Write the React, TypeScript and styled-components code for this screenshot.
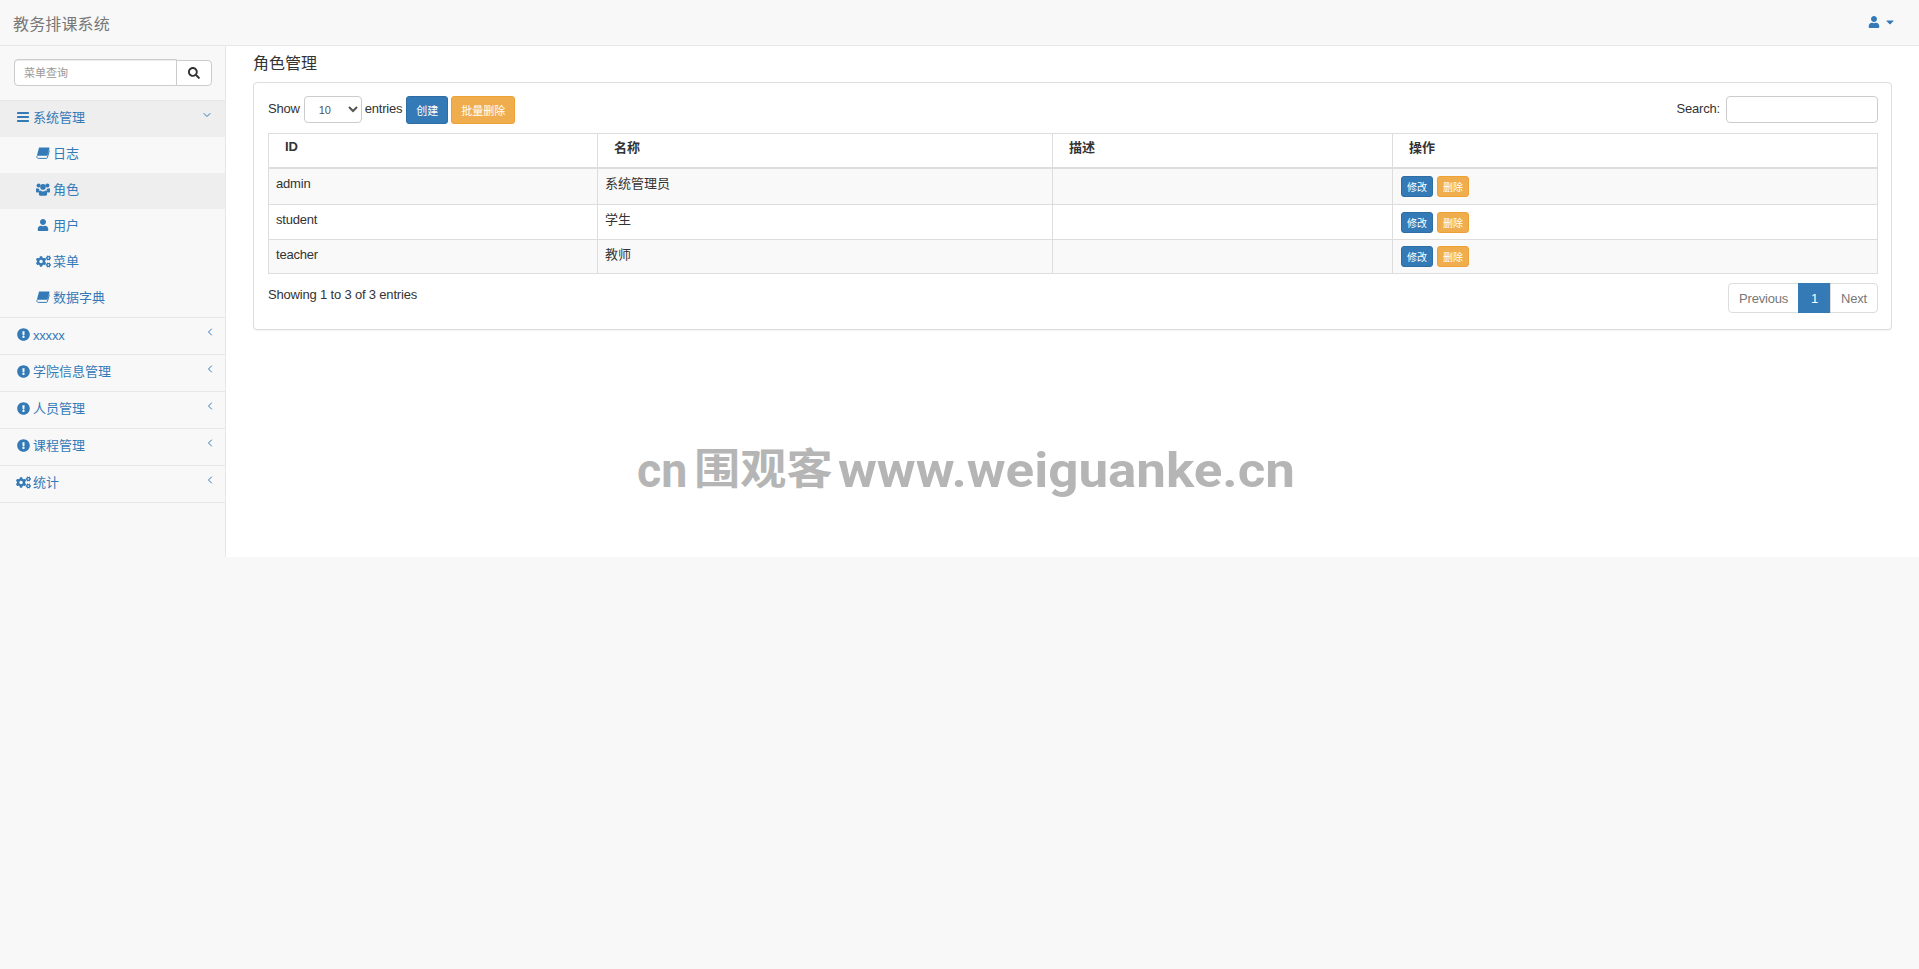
import React from 'react'
import styled, { createGlobalStyle } from 'styled-components'
import { FaCaretDown, FaCogs, FaExclamationCircle, FaSearch, FaUser } from 'react-icons/fa'
import { FiChevronDown, FiChevronLeft } from 'react-icons/fi'

const BLUE = '#337ab7'
const ORANGE = '#f0ad4e'
const LINE = '#ddd'
const FONT = '"Liberation Sans", "Noto Sans CJK SC", Arial, sans-serif'

const GlobalStyle = createGlobalStyle`
  html, body {
    margin: 0;
    padding: 0;
    height: 100%;
  }
  body {
    background: #f8f8f8;
    font-family: ${FONT};
    font-size: 13px;
    color: #333;
  }
  * {
    box-sizing: border-box;
  }
`

const BookIcon = () => (
  <svg width="14" height="12" viewBox="0 0 14 12">
    <path
      fill="currentColor"
      d="M3.4.4h9.4c.5 0 .8.4.7.9l-2 6.9c-.1.4-.4.6-.8.6H1.600c-.3 0-.6.1-.8.3L3 .7c.1-.2.2-.3.4-.3z"
    />
    <path
      fill="none"
      stroke="currentColor"
      strokeWidth="1"
      d="M.9 9.2c-.3 1.1.3 2.2 1.4 2.2h8.2c.4 0 .7-.2.8-.6L13.4 3.6"
    />
  </svg>
)

const BarsIcon = () => (
  <svg width="12" height="10" viewBox="0 0 12 10" fill="currentColor">
    <rect y="0" width="12" height="2" rx=".4" />
    <rect y="4" width="12" height="2" rx=".4" />
    <rect y="8" width="12" height="2" rx=".4" />
  </svg>
)

const UsersIcon = () => (
  <svg width="14" height="13" viewBox="0 0 14 13" fill="currentColor">
    <circle cx="2.6" cy="2.4" r="2" />
    <circle cx="11.4" cy="2.4" r="2" />
    <circle cx="7" cy="3.9" r="2.8" />
    <path d="M.2 5.6C.7 5 1.2 5.2 1.6 5.5c.5.3 1 .4 1.6.3-.1 1 .1 1.9.7 2.6-.6.2-1.1.6-1.5 1.1H1C.3 9.500 0 9 0 8.200V6.100c0-.2 0-.4.2-.5zM13.800 5.600c-.5-.6-1-.4-1.400-.1-.5.3-1 .4-1.600.3.1 1-.1 1.900-.7 2.600.6.2 1.100.6 1.500 1.100H13c.7 0 1-.5 1-1.300V6.100c0-.2 0-.4-.2-.5z" />
    <path d="M4.600 7.500c.7.600 1.500.9 2.400.9s1.700-.3 2.400-.9c1 0 1.700.7 1.700 2v1.500c0 1-.6 1.700-1.500 1.700H4.400c-.9 0-1.500-.7-1.500-1.700V9.500c0-1.300.7-2 1.700-2z" />
  </svg>
)

const Navbar = styled.div`
  height: 46px;
  display: flex;
  align-items: center;
  justify-content: space-between;
  padding: 0 26px 0 13px;
  background: #f8f8f8;
  border-bottom: 1px solid #e7e7e7;
`

const Brand = styled.span`
  font-size: 16px;
  letter-spacing: 0.15px;
  color: #777;
`

const UserMenu = styled.span`
  display: flex;
  align-items: center;
  gap: 4px;
  color: ${BLUE};
  font-size: 12px;
  margin: -1px -3px 0 0;
`

const Body = styled.div`
  display: flex;
  height: 511px;
  position: relative;
`

const Sidebar = styled.div`
  width: 226px;
  flex: 0 0 226px;
  border-right: 1px solid #e7e7e7;
`

const SearchRow = styled.div`
  height: 55px;
  display: flex;
  padding: 13px 0 0 14px;
  border-bottom: 1px solid #e7e7e7;
`

const SearchInput = styled.input`
  width: 163px;
  height: 27px;
  border: 1px solid #ccc;
  border-radius: 4px 0 0 4px;
  padding: 0 9px;
  font-family: ${FONT};
  font-size: 11px;
  background: #fff;
  outline: none;
  box-shadow: inset 0 1px 1px rgba(0, 0, 0, 0.075);
  &::placeholder {
    color: #999;
    opacity: 1;
  }
`

const SearchButton = styled.button`
  width: 36px;
  height: 26px;
  margin-left: -1px;
  margin-top: 1px;
  padding: 0;
  display: flex;
  align-items: center;
  justify-content: center;
  color: #333;
  background: #fff;
  border: 1px solid #ccc;
  border-radius: 0 4px 4px 0;
  font-size: 12px;
`

const MenuRow = styled.div<{ $sub?: boolean; $active?: boolean; $divider?: boolean }>`
  display: flex;
  align-items: center;
  height: ${p => (p.$divider ? 37 : 36)}px;
  padding: 0 9px 6px ${p => (p.$sub ? 35 : 15)}px;
  color: ${BLUE};
  font-size: 13px;
  background: ${p => (p.$active ? '#eee' : 'transparent')};
  border-bottom: ${p => (p.$divider ? '1px solid #e7e7e7' : '0')};
`

const MenuIcon = styled.span`
  width: 18px;
  margin: 2px 1px 0 -1px;
  display: flex;
  align-items: center;
  justify-content: center;
  font-size: 13px;
`

const MenuLabel = styled.span<{ $latin?: boolean }>`
  flex: 1;
  margin-top: ${p => (p.$latin ? 4 : 0)}px;
  letter-spacing: ${p => (p.$latin ? '-0.2px' : '0')};
`

const Arrow = styled.span<{ $down?: boolean }>`
  display: flex;
  font-size: 12px;
  margin-top: -2px;
  margin-right: ${p => (p.$down ? 3 : 0)}px;
`

const Main = styled.div`
  flex: 1;
  background: #fff;
  padding: 8px 27px 0 27px;
`

const PageTitle = styled.div`
  font-size: 16px;
  line-height: 20px;
  height: 28px;
`

const Panel = styled.div`
  height: 248px;
  padding: 13px 13px 0 14px;
  background: #fff;
  border: 1px solid ${LINE};
  border-radius: 4px;
  box-shadow: 0 1px 1px rgba(0, 0, 0, 0.05);
`

const Toolbar = styled.div`
  display: flex;
  justify-content: space-between;
  height: 37px;
`

const ToolGroup = styled.div`
  display: flex;
  align-items: flex-start;
`

const ToolText = styled.span`
  line-height: 25px;
  letter-spacing: -0.2px;
  white-space: pre;
`

const LengthSelect = styled.select`
  width: 58px;
  height: 27px;
  margin: 0 3px 0 4px;
  padding-left: 10px;
  font-family: ${FONT};
  font-size: 11px;
  color: #555;
  background: #fff;
  border: 1px solid #ccc;
  border-radius: 4px;
  outline: none;
`

const ActionButton = styled.button<{ $warn?: boolean }>`
  height: 28px;
  padding: 0 9px;
  margin-left: ${p => (p.$warn ? 3 : 4)}px;
  font-family: ${FONT};
  font-size: 11px;
  color: #fff;
  background: ${p => (p.$warn ? ORANGE : BLUE)};
  border: 1px solid ${p => (p.$warn ? '#eea236' : '#2e6da4')};
  border-radius: 3px;
`

const SearchBox = styled.input`
  width: 152px;
  height: 27px;
  margin-left: 6px;
  background: #fff;
  border: 1px solid #ccc;
  border-radius: 4px;
  outline: none;
`

const Table = styled.table`
  width: 100%;
  border-collapse: collapse;
  table-layout: fixed;
  border: 1px solid ${LINE};
`

const HeadCell = styled.th`
  height: 34px;
  padding: 0 0 8px 16px;
  text-align: left;
  font-size: 13px;
  font-weight: 700;
  border: 1px solid ${LINE};
  border-bottom-width: 2px;
`

const Row = styled.tr<{ $odd?: boolean }>`
  background: ${p => (p.$odd ? '#f9f9f9' : '#fff')};
`

const Cell = styled.td<{ $height: number; $actions?: boolean }>`
  height: ${p => p.$height}px;
  padding: 0 7px ${p => (p.$actions ? 0 : 7)}px;
  font-size: 13px;
  border: 1px solid ${LINE};
`

const IdText = styled.span`
  letter-spacing: -0.2px;
  position: relative;
  top: 1px;
`

const RowActions = styled.div`
  display: flex;
  gap: 4px;
  padding-left: 1px;
`

const SmallButton = styled.span<{ $warn?: boolean }>`
  height: 21px;
  width: 32px;
  display: flex;
  align-items: center;
  justify-content: center;
  font-size: 10px;
  color: #fff;
  background: ${p => (p.$warn ? ORANGE : BLUE)};
  border: 1px solid ${p => (p.$warn ? '#eea236' : '#2e6da4')};
  border-radius: 3px;
`

const Footer = styled.div`
  display: flex;
  justify-content: space-between;
  padding-top: 9px;
`

const Info = styled.div`
  line-height: 24px;
  letter-spacing: -0.18px;
`

const Pager = styled.div`
  display: flex;
  height: 30px;
`

const PageLink = styled.span<{ $current?: boolean; $pos?: 'first' | 'last' }>`
  display: flex;
  align-items: center;
  padding: 0 ${p => (p.$current ? 12 : p.$pos ? 10 : 11)}px;
  font-size: 13px;
  letter-spacing: -0.2px;
  color: ${p => (p.$current ? '#fff' : '#777')};
  background: ${p => (p.$current ? BLUE : '#fff')};
  border: 1px solid ${p => (p.$current ? BLUE : LINE)};
  margin-left: ${p => (p.$pos === 'first' ? 0 : -1)}px;
  border-radius: ${p =>
    p.$pos === 'first' ? '4px 0 0 4px' : p.$pos === 'last' ? '0 4px 4px 0' : '0'};
`

const Watermark = styled.div`
  position: absolute;
  left: 637px;
  top: 393px;
  display: flex;
  align-items: baseline;
  color: #b5b5b5;
  white-space: nowrap;
`

const MarkLatin = styled.span<{ $width: number; $scale: number }>`
  display: block;
  width: ${p => p.$width}px;
  font-family: Roboto, "Liberation Sans", sans-serif;
  font-size: 49px;
  line-height: 60px;
  font-weight: 700;
  transform: scaleX(${p => p.$scale});
  transform-origin: left;
`

const MarkCjk = styled.span`
  display: block;
  width: 144px;
  font-family: "Noto Sans CJK SC", sans-serif;
  font-size: 42px;
  line-height: 60px;
  font-weight: 700;
  transform: translateY(-3px) scaleX(1.1);
  transform-origin: left;
`

const subItems = [
  { label: '日志', icon: <BookIcon /> },
  { label: '角色', icon: <UsersIcon />, active: true },
  { label: '用户', icon: <FaUser size={12} /> },
  { label: '菜单', icon: <FaCogs size={15} /> },
  { label: '数据字典', icon: <BookIcon />, divider: true },
]

const groups = [
  { label: 'xxxxx', icon: <FaExclamationCircle />, latin: true },
  { label: '学院信息管理', icon: <FaExclamationCircle /> },
  { label: '人员管理', icon: <FaExclamationCircle /> },
  { label: '课程管理', icon: <FaExclamationCircle /> },
  { label: '统计', icon: <FaCogs size={15} /> },
]

const roles = [
  { id: 'admin', name: '系统管理员', height: 37 },
  { id: 'student', name: '学生', height: 35 },
  { id: 'teacher', name: '教师', height: 34 },
]

export default function App() {
  return (
    <>
      <GlobalStyle />
      <Navbar>
        <Brand>教务排课系统</Brand>
        <UserMenu>
          <FaUser />
          <FaCaretDown />
        </UserMenu>
      </Navbar>
      <Body>
        <Sidebar>
          <SearchRow>
            <SearchInput placeholder="菜单查询" />
            <SearchButton>
              <FaSearch />
            </SearchButton>
          </SearchRow>
          <MenuRow $active>
            <MenuIcon>
              <BarsIcon />
            </MenuIcon>
            <MenuLabel>系统管理</MenuLabel>
            <Arrow $down>
              <FiChevronDown />
            </Arrow>
          </MenuRow>
          {subItems.map(item => (
            <MenuRow key={item.label} $sub $active={item.active} $divider={item.divider}>
              <MenuIcon>{item.icon}</MenuIcon>
              <MenuLabel>{item.label}</MenuLabel>
            </MenuRow>
          ))}
          {groups.map(group => (
            <MenuRow key={group.label} $divider>
              <MenuIcon>{group.icon}</MenuIcon>
              <MenuLabel $latin={group.latin}>{group.label}</MenuLabel>
              <Arrow>
                <FiChevronLeft />
              </Arrow>
            </MenuRow>
          ))}
        </Sidebar>
        <Main>
          <PageTitle>角色管理</PageTitle>
          <Panel>
            <Toolbar>
              <ToolGroup>
                <ToolText>Show</ToolText>
                <LengthSelect defaultValue="10">
                  <option>10</option>
                </LengthSelect>
                <ToolText>entries</ToolText>
                <ActionButton>创建</ActionButton>
                <ActionButton $warn>批量删除</ActionButton>
              </ToolGroup>
              <ToolGroup>
                <ToolText>Search:</ToolText>
                <SearchBox />
              </ToolGroup>
            </Toolbar>
            <Table>
              <colgroup>
                <col style={{ width: 329 }} />
                <col style={{ width: 455 }} />
                <col style={{ width: 340 }} />
                <col />
              </colgroup>
              <thead>
                <tr>
                  <HeadCell>ID</HeadCell>
                  <HeadCell>名称</HeadCell>
                  <HeadCell>描述</HeadCell>
                  <HeadCell>操作</HeadCell>
                </tr>
              </thead>
              <tbody>
                {roles.map((role, i) => (
                  <Row key={role.id} $odd={i % 2 === 0}>
                    <Cell $height={role.height}>
                      <IdText>{role.id}</IdText>
                    </Cell>
                    <Cell $height={role.height}>{role.name}</Cell>
                    <Cell $height={role.height} />
                    <Cell $height={role.height} $actions>
                      <RowActions>
                        <SmallButton>修改</SmallButton>
                        <SmallButton $warn>删除</SmallButton>
                      </RowActions>
                    </Cell>
                  </Row>
                ))}
              </tbody>
            </Table>
            <Footer>
              <Info>Showing 1 to 3 of 3 entries</Info>
              <Pager>
                <PageLink $pos="first">Previous</PageLink>
                <PageLink $current>1</PageLink>
                <PageLink $pos="last">Next</PageLink>
              </Pager>
            </Footer>
          </Panel>
        </Main>
        <Watermark>
          <MarkLatin $width={57} $scale={0.95}>cn</MarkLatin>
          <MarkCjk>围观客</MarkCjk>
          <MarkLatin $width={454} $scale={1.08}>www.weiguanke.cn</MarkLatin>
        </Watermark>
      </Body>
    </>
  )
}
